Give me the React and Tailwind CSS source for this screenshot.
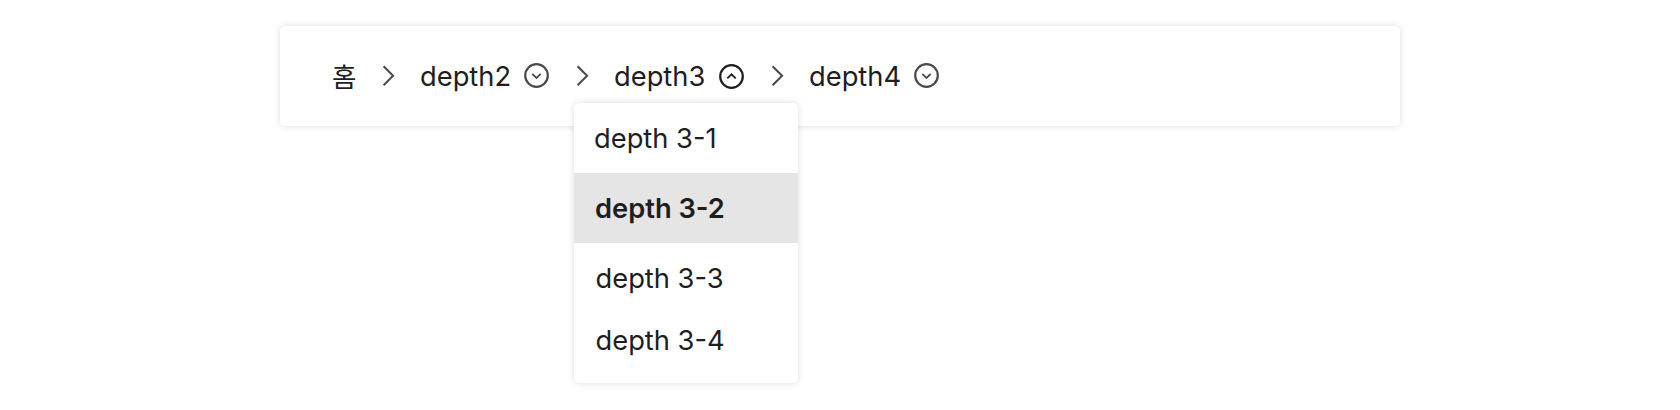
const Sep = () => (
  <svg className="h-[22px] w-[13px] shrink-0 overflow-visible" viewBox="0 0 13 22" fill="none" stroke="#4a4a4a" strokeWidth="2">
    <path d="M0.6 1.3L10.1 10.8L0.6 20.3" />
  </svg>
);

const Toggle = ({ up }) => (
  <svg
    className={up ? "mt-px h-[25px] w-[25px] shrink-0" : "mb-px h-[25px] w-[25px] shrink-0"}
    viewBox="0 0 25 25"
    fill="none"
    stroke={up ? "#1e1e1e" : "#4a4a4a"}
    strokeWidth="2.2"
  >
    <circle cx="12.5" cy="12.5" r="11.3" />
    <path strokeWidth="1.8" d={up ? "M8.3 14.3L12.5 10.3L16.7 14.3" : "M8.3 10.9L12.5 14.9L16.7 10.9"} />
  </svg>
);

export default function App() {
  return (
    <div className="h-[410px] w-[1680px] bg-white pt-[26px] pl-[280px] font-['Inter','Noto_Sans_CJK_KR',sans-serif] text-[27.3px] leading-[32px] text-[#1e1e1e]">
      <nav className="relative flex h-[100px] w-[1120px] items-center rounded-[5px] bg-white pl-[52px] shadow-[0_0_7px_rgba(0,0,0,0.14)]">
        <span className="w-[51px] pt-px text-[26.5px]">홈</span>
        <Sep />
        <span className="ml-[24px] w-[104px] pt-px">depth2</span>
        <Toggle />
        <span className="ml-[28px] flex"><Sep /></span>
        <span className="ml-[24px] w-[105px] pt-px">depth3</span>
        <Toggle up />
        <span className="ml-[28px] flex"><Sep /></span>
        <span className="ml-[24px] w-[105px] pt-px">depth4</span>
        <Toggle />
        <ul className="absolute top-[77px] left-[294px] h-[280px] w-[224px] rounded-[5px] bg-white shadow-[0_0_7px_rgba(0,0,0,0.14)]">
          <li className="flex h-[70px] items-center pt-px pl-[20px]">depth 3-1</li>
          <li className="flex h-[70px] items-center bg-[#e5e5e5] pt-px pl-[21px] font-semibold">depth 3-2</li>
          <li className="flex h-[70px] items-center pt-[2px] pl-[21.5px]">depth 3-3</li>
          <li className="flex h-[54px] items-center pt-[2px] pl-[21.5px]">depth 3-4</li>
        </ul>
      </nav>
    </div>
  );
}
